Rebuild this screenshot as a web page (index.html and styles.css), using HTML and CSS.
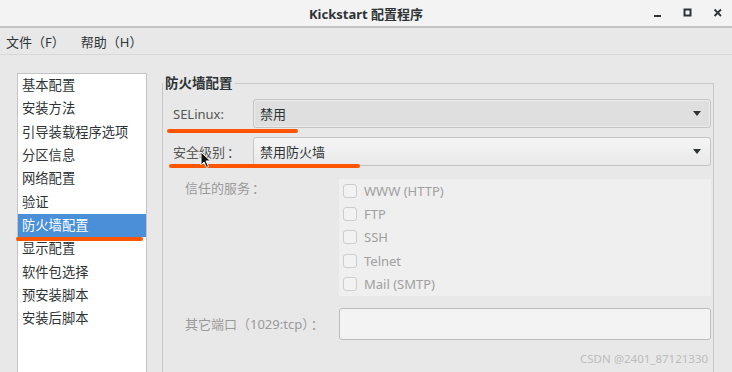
FILE: index.html
```html
<!DOCTYPE html>
<html lang="zh-CN">
  <head>
    <meta charset="UTF-8" />
    <meta name="viewport" content="width=device-width, initial-scale=1.0" />
    <title>Kickstart 配置程序</title>
    <link rel="stylesheet" href="styles.css">
  </head>
  <body>
    <div class="window">
      <header class="titlebar">
        <span></span>
        <span class="title">Kickstart 配置程序</span>
        <div class="controls">
          <svg width="10" height="10" viewBox="0 0 10 10"><rect x="1" y="7" width="7" height="2" fill="#2e3436"/></svg>
          <svg width="10" height="10" viewBox="0 0 10 10"><rect x="1.5" y="1.5" width="6" height="6" fill="none" stroke="#2e3436" stroke-width="2"/></svg>
          <svg width="10" height="10" viewBox="0 0 10 10"><path d="M1.5 1.5 L8 8 M8 1.5 L1.5 8" stroke="#2e3436" stroke-width="1.8"/></svg>
        </div>
      </header>

      <nav class="menubar">
        <span>文件（F）</span>
        <span>帮助（H）</span>
      </nav>

      <div class="main">
        <ul class="sections">
          <li>基本配置</li>
          <li>安装方法</li>
          <li>引导装载程序选项</li>
          <li>分区信息</li>
          <li>网络配置</li>
          <li>验证</li>
          <li class="selected">防火墙配置</li>
          <li>显示配置</li>
          <li>软件包选择</li>
          <li>预安装脚本</li>
          <li>安装后脚本</li>
        </ul>

        <fieldset class="frame">
          <legend>防火墙配置</legend>

          <div class="top-grid">
            <label class="label">SELinux:</label>
            <div class="combo pressed">
              <span>禁用</span>
              <svg class="arrow" width="8" height="5" viewBox="0 0 8 5"><path d="M0 0 H8 L4 5 Z" fill="#2e3436"/></svg>
            </div>
            <label class="label">安全级别<span class="colon">：</span></label>
            <div class="combo">
              <span>禁用防火墙</span>
              <svg class="arrow" width="8" height="5" viewBox="0 0 8 5"><path d="M0 0 H8 L4 5 Z" fill="#2e3436"/></svg>
            </div>
          </div>

          <div class="bottom-grid">
            <span class="dim services-label">信任的服务<span class="colon">：</span></span>
            <div class="services">
              <div class="check"><span class="box"></span>WWW (HTTP)</div>
              <div class="check"><span class="box"></span>FTP</div>
              <div class="check"><span class="box"></span>SSH</div>
              <div class="check"><span class="box"></span>Telnet</div>
              <div class="check"><span class="box"></span>Mail (SMTP)</div>
            </div>
            <span class="dim">其它端口（1029:tcp）<span class="colon">：</span></span>
            <div class="entry"></div>
          </div>
        </fieldset>
      </div>

      <!-- annotations drawn over the screenshot -->
      <div class="mark mark-selinux"></div>
      <div class="mark mark-level"></div>
      <div class="mark mark-list"></div>
      <svg class="cursor" width="12" height="18" viewBox="0 0 12 18">
        <path d="M1 1 L1 14 L4 11 L6.5 16.5 L8.5 15.5 L6 10 L10.5 10 Z" fill="#111" stroke="#fff" stroke-width="1"/>
      </svg>
      <div class="watermark">CSDN @2401_87121330</div>
    </div>
  </body>
</html>
```

FILE: styles.css
```css
html,
body {
  margin: 0;
  padding: 0;
}

body {
  width: 732px;
  height: 372px;
  overflow: hidden;
  background: #e8e8e8;
  font-family: "Noto Sans", "Noto Sans CJK SC", sans-serif;
  font-size: 13px;
  color: #2e3436;
}

.window {
  position: relative;
  height: 372px;
}

.titlebar {
  display: grid;
  grid-template-columns: 1fr auto 1fr;
  align-items: center;
  height: 26px;
  background: #f3f3f3;
  border-bottom: 2px solid #c2c2c2;
}

.title {
  font-weight: bold;
  font-size: 13px;
}

.controls {
  display: flex;
  justify-content: flex-end;
  gap: 20px;
  padding-right: 9px;
}

.menubar {
  display: flex;
  align-items: center;
  gap: 16px;
  height: 26px;
  padding-left: 6px;
  border-bottom: 1px solid #d8d8d8;
}

.main {
  display: flex;
  gap: 15px;
  height: 330px;
  padding: 18px 0 0 17px;
}

.sections {
  list-style: none;
  margin: 0;
  padding: 0;
  width: 128px;
  background: #fff;
  border: 1px solid #c4c4c4;
  font-size: 13.3px;
}

.sections li {
  height: 23.33px;
  line-height: 23px;
  padding-left: 4px;
}

.sections li.selected {
  background: #4a90d9;
  color: #fff;
}

.frame {
  margin: 1px 0 0;
  padding: 0 2px 0 0;
  border: 1px solid #c8c8c8;
  box-sizing: border-box;
  width: 552px;
  min-width: 0;
}

.frame legend {
  padding: 0 2px;
  margin-left: 0;
  font-weight: bold;
  font-size: 13.5px;
  line-height: 18px;
}

.colon {
  font-family: "Noto Sans CJK TC", sans-serif;
  padding-left: 2px;
}

.top-grid {
  display: grid;
  grid-template-columns: 80px 1fr;
  row-gap: 9px;
  align-items: center;
  padding: 7px 0 0 10px;
}

.label {
  color: #555753;
}

.combo {
  display: flex;
  align-items: center;
  justify-content: space-between;
  height: 27px;
  padding: 0 9px 0 6px;
  border: 1px solid #c4c4c4;
  border-radius: 3px;
  background: linear-gradient(#f5f5f5, #e9e9e9);
}

.combo.pressed {
  background: #dfdfdf;
  box-shadow: inset 0 0 0 1px #ececec;
}

.bottom-grid {
  display: grid;
  grid-template-columns: 154px 1fr;
  row-gap: 12px;
  align-items: center;
  padding: 13px 0 0 22px;
}

.dim {
  color: #9a9a9a;
}

.services-label {
  align-self: start;
  line-height: 17px;
}

.services {
  background: #efefef;
  padding-left: 4px;
}

.check {
  display: flex;
  align-items: center;
  gap: 7px;
  height: 23.4px;
  color: #a0a0a0;
}

.box {
  width: 12px;
  height: 12px;
  border: 1px solid #cdcdcd;
  border-radius: 3px;
  background: #f2f2f2;
}

.entry {
  height: 30px;
  border: 1px solid #bdbdbd;
  border-radius: 3px;
  background: #f3f3f3;
}

.mark {
  position: absolute;
  height: 4px;
  border-radius: 2px;
  background: #ff5500;
}

.mark-selinux {
  left: 167px;
  top: 129px;
  width: 131px;
}

.mark-level {
  left: 169px;
  top: 164px;
  width: 191px;
}

.mark-list {
  left: 16px;
  top: 237px;
  width: 127px;
}

.cursor {
  position: absolute;
  left: 200px;
  top: 151px;
}

.watermark {
  position: absolute;
  left: 580px;
  top: 351px;
  font-size: 11.5px;
  color: #bcbcbc;
}
```
